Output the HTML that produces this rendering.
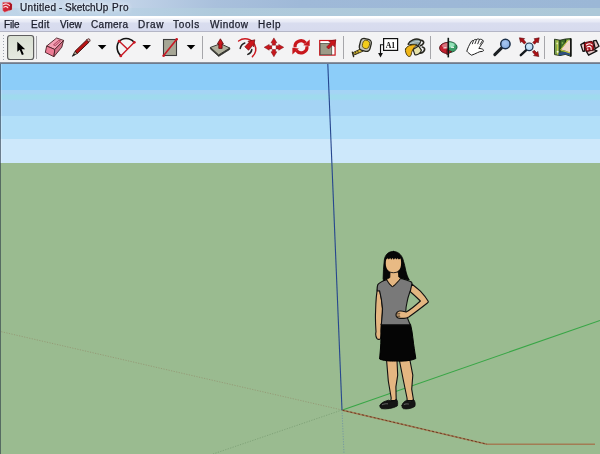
<!DOCTYPE html>
<html>
<head>
<meta charset="utf-8">
<title>Untitled - SketchUp Pro</title>
<style>
html,body{margin:0;padding:0;}
body{width:600px;height:454px;overflow:hidden;position:relative;background:#9abb90;font-family:"Liberation Sans",sans-serif;}
#title{position:absolute;left:0;top:0;width:600px;height:16px;
  background:linear-gradient(to right,#c9daec 0%,#c4d5e9 20%,#a9c0dc 36%,#9fb9d8 50%,#9bb7d6 100%);}
#title .lower{position:absolute;left:0;top:8px;width:600px;height:8px;
  background:linear-gradient(to right,#bfd5e8 0%,#bad1e5 20%,#afcadc 36%,#acc8d8 100%);}
#title .txt{position:absolute;left:0;top:0;height:16px;line-height:15px;font-size:10px;color:#1b1d2b;white-space:nowrap;text-shadow:0 0 4px rgba(255,255,255,.9),0 0 6px rgba(255,255,255,.7);}
#title .txt span{will-change:transform;position:absolute;top:0.3px;-webkit-text-stroke:0.25px #1b1d2b;}
#menu{position:absolute;left:0;top:16px;width:600px;height:16px;
  background:linear-gradient(to bottom,#ffffff 0,#ffffff 2px,#eef0f8 3px,#e6e9f5 6px,#d9ddef 7px,#d7dbee 14px,#d7dbee 15px,#b4b6c6 15px,#b4b6c6 16px);}
#menu span{will-change:transform;position:absolute;top:1px;-webkit-text-stroke:0.25px #1b1d2b;line-height:16px;font-size:10px;color:#1b1d2b;white-space:nowrap;}
#tb{position:absolute;left:0;top:32px;width:600px;height:30px;background:#f3f3f4;}
#tbline{position:absolute;left:0;top:62px;width:600px;height:2px;background:linear-gradient(to bottom,#9a9ea6,#5f6f86);}
#tbsvg{will-change:transform;position:absolute;left:0;top:32px;width:600px;height:32px;}
#view{position:absolute;left:0;top:64px;width:600px;height:390px;}
</style>
</head>
<body>
<div id="title"><div class="lower"></div><svg style="position:absolute;left:0;top:0" width="16" height="16" viewBox="0 0 16 16">
<path d="M2.6 2.6 Q2.6 2.2 3.2 2.2 L9.8 2.2 L12 4.4 L11.8 9.6 L4.6 12.2 L2.8 10.4 Z" fill="#cf2434" stroke="#e8a0a8" stroke-width="0.5"/>
<path d="M9.8 2.2 L12 4.4 L11.8 9.6 L9.6 10.4 Z" fill="#a81422"/>
<path d="M3.4 4.6 C5.4 3.4 8.4 3.8 9.4 5.6 M3.8 7.2 C5.2 6.2 7.2 6.4 7.8 7.8" fill="none" stroke="#fbe4e6" stroke-width="1.1" stroke-linecap="round"/>
</svg><div class="txt"><span style="left:19.5px;letter-spacing:0.3px">Untitled</span><span style="left:59.2px">-</span><span style="left:65.3px">SketchUp</span><span style="left:111.7px;letter-spacing:0.5px">Pro</span></div></div>
<div id="menu">
<span style="left:4.3px;letter-spacing:-0.2px">File</span>
<span style="left:30.7px;letter-spacing:0.35px">Edit</span>
<span style="left:60px;letter-spacing:0.1px">View</span>
<span style="left:91px;letter-spacing:0.3px">Camera</span>
<span style="left:138.2px;letter-spacing:0.75px">Draw</span>
<span style="left:173px;letter-spacing:0.7px">Tools</span>
<span style="left:210px;letter-spacing:0.5px">Window</span>
<span style="left:258px;letter-spacing:0.7px">Help</span>
</div>
<div id="tb"></div>
<svg id="tbsvg" viewBox="0 32 600 32">
<defs>
<linearGradient id="selg" x1="0" y1="0" x2="0" y2="1"><stop offset="0" stop-color="#d9dfd2"/><stop offset="1" stop-color="#e6eae0"/></linearGradient>
<radialGradient id="lens1" cx="0.45" cy="0.4" r="0.7"><stop offset="0" stop-color="#a9c8f2"/><stop offset="1" stop-color="#7ea6de"/></radialGradient>
<radialGradient id="lens2" cx="0.45" cy="0.4" r="0.7"><stop offset="0" stop-color="#d4ecfb"/><stop offset="1" stop-color="#a6d0f2"/></radialGradient>
</defs>
<!-- grip -->
<g fill="#9da2ac">
<rect x="3" y="35" width="1" height="1"/><rect x="3" y="38" width="1" height="1"/><rect x="3" y="41" width="1" height="1"/><rect x="3" y="44" width="1" height="1"/><rect x="3" y="47" width="1" height="1"/><rect x="3" y="50" width="1" height="1"/><rect x="3" y="53" width="1" height="1"/><rect x="3" y="56" width="1" height="1"/><rect x="3" y="59" width="1" height="1"/>
</g>
<!-- select button -->
<rect x="7.6" y="35.5" width="26" height="24" rx="2.5" fill="url(#selg)" stroke="#5e5e5e" stroke-width="1.2"/>
<path d="M17.3 41.8 L17.3 51.8 L19.7 49.8 L21.9 55 L23.8 54.2 L21.6 49.2 L25.2 49.2 Z" fill="#000"/>
<!-- separators -->
<g stroke="#a6a6aa" stroke-width="1">
<line x1="36.5" y1="36" x2="36.5" y2="59"/>
<line x1="202.5" y1="36" x2="202.5" y2="59"/>
<line x1="343.5" y1="36" x2="343.5" y2="59"/>
<line x1="430.5" y1="36" x2="430.5" y2="59"/>
<line x1="544.5" y1="36" x2="544.5" y2="59"/>
</g>
<!-- eraser -->
<g stroke="#4a2026" stroke-width="0.9" stroke-linejoin="round">
<path d="M46.7 46 L56.6 38 L63.6 40.4 L54.8 49.5 Z" fill="#f3a0b3"/>
<path d="M46.7 46 L54.8 49.5 L53.9 56.7 L45.3 52.4 Z" fill="#ec7c95"/>
<path d="M54.8 49.5 L63.6 40.4 L61.8 47.2 L53.9 56.7 Z" fill="#d27187"/>
</g>
<path d="M53.5 44.8 L58.8 40.3 L60.6 41 L55.4 45.7 Z" fill="#e88aa0" stroke="#9a3850" stroke-width="0.8"/>
<!-- pencil -->
<g>
<path d="M72.4 56.3 L75 51.2 L77.4 53.4 Z" fill="#b8a890" stroke="#222" stroke-width="0.8"/>
<path d="M72.4 56.3 L73.8 53.6 L75.2 54.8 Z" fill="#111"/>
<path d="M75 51.2 L86.6 40 L89 42.2 L77.4 53.4 Z" fill="#b81414" stroke="#3a0c0c" stroke-width="0.9"/>
<path d="M86.6 40 L87.6 39 Q88.8 38.4 89.6 39.2 Q90.4 40.2 89.8 41.3 L89 42.2 Z" fill="#d8b0b0" stroke="#3a0c0c" stroke-width="0.8"/>
</g>
<!-- dropdown arrows -->
<g fill="#000">
<path d="M97.8 45 L106.4 45 L102.1 49.6 Z"/>
<path d="M142.4 45 L151 45 L146.7 49.6 Z"/>
<path d="M186.7 45 L195.3 45 L191 49.6 Z"/>
</g>
<!-- arc -->
<g fill="none">
<path d="M120.8 55.9 C115.5 50.5 116 42.5 121.5 39.6 C126 37.2 131.5 38.8 134.3 42.3" stroke="#111" stroke-width="1.6"/>
<path d="M120.8 55.9 L134.3 42.3 M119.2 41.2 L127.4 48.9" stroke="#c81824" stroke-width="1.4"/>
</g>
<g fill="#c81824"><circle cx="120.8" cy="55.9" r="1.4"/><circle cx="134.3" cy="42.3" r="1.4"/><circle cx="119.2" cy="41.2" r="1.4"/></g>
<!-- rectangle -->
<rect x="163.5" y="39.5" width="13" height="16" fill="#a6a695" stroke="#3c3c3c" stroke-width="1.1"/>
<path d="M163.5 55.7 L176.7 39.2" stroke="#c81824" stroke-width="1.6"/>
<g fill="#c81824"><circle cx="163.6" cy="55.7" r="1.3"/><circle cx="176.7" cy="39.3" r="1.3"/></g>
<!-- push/pull -->
<g stroke-linejoin="round">
<path d="M210.4 47.4 L218.7 54.9 L229.8 48 L229.8 49.4 L218.7 56.4 L210.4 48.9 Z" fill="#3a3a34" stroke="#2a2a26" stroke-width="0.7"/>
<path d="M210.4 47.4 L220.5 43.7 L229.8 48 L218.7 54.9 Z" fill="#b0b09d" stroke="#2a2a26" stroke-width="0.9"/>
<path d="M220.4 38.8 L223.4 43.8 L222.1 43.8 L222.1 48.4 L218.8 48.4 L218.8 43.8 L217.4 43.8 Z" fill="#cc161c" stroke="#5a0a0c" stroke-width="0.8"/>
</g>
<!-- offset -->
<g fill="none" stroke-linecap="round">
<path d="M238.6 41 C244 37 251.4 38.6 254.6 44.6 C256.6 48.6 255.6 53.4 252.4 56.6" stroke="#cb1a20" stroke-width="1.5"/>
<path d="M240.2 48.4 C240.8 45.6 242.6 43.8 244.8 43" stroke="#222" stroke-width="1.5"/>
<path d="M251.8 49.6 C251.6 51.4 250 53.4 247.8 54.4" stroke="#222" stroke-width="1.5"/>
</g>
<path d="M244.8 46.8 L249 42.6 L248 41.4 L254.8 39.8 L253.6 46.8 L252.4 45.6 L248.6 50.2 Z" fill="#cc161c" stroke="#6a0a0c" stroke-width="0.7" stroke-linejoin="round"/>
<!-- move -->
<g fill="#c8161c" stroke="#7a0c10" stroke-width="0.5" stroke-linejoin="round">
<path d="M273.9 37.9 L276.8 42.8 L275.5 42.8 L275.5 45.2 L272.3 45.2 L272.3 42.8 L271 42.8 Z"/>
<path d="M273.9 56.7 L276.8 51.8 L275.5 51.8 L275.5 49.4 L272.3 49.4 L272.3 51.8 L271 51.8 Z"/>
<path d="M264.2 47.3 L269.2 44.4 L269.2 45.7 L271.8 45.7 L271.8 48.9 L269.2 48.9 L269.2 50.2 Z"/>
<path d="M283.7 47.3 L278.7 44.4 L278.7 45.7 L276.1 45.7 L276.1 48.9 L278.7 48.9 L278.7 50.2 Z"/>
</g>
<rect x="272.5" y="45.9" width="2.8" height="2.8" fill="#fff"/>
<!-- rotate -->
<g fill="none" stroke="#c8161c" stroke-width="3.2">
<path d="M295.1 47.4 A5.9 5.9 0 0 1 305.6 43"/>
<path d="M306.9 46.2 A5.9 5.9 0 0 1 296.4 50.6"/>
</g>
<g fill="#c8161c">
<path d="M309.7 39.4 L309.7 46 L303.2 45.2 Z"/>
<path d="M292.4 54.4 L292.4 47.8 L298.9 48.6 Z"/>
</g>
<!-- scale -->
<rect x="319.7" y="40.5" width="15.4" height="14.6" fill="#fff" stroke="#c8161c" stroke-width="1.2"/>
<rect x="320.3" y="43.4" width="11.4" height="11.3" fill="#9c9c89" stroke="#55554a" stroke-width="0.8"/>
<path d="M326.6 47 L330.6 43 L328.8 41.2 L335.9 39.7 L334.4 46.8 L332.6 45 L328.6 49 Z" fill="#c8161c" stroke="#7a0c10" stroke-width="0.6"/>
<!-- tape -->
<g stroke-linejoin="round">
<path d="M361.4 48.6 L353.4 52.4 L354.4 55 L363.4 51 Z" fill="#e0c030" stroke="#2a2618" stroke-width="0.9"/>
<path d="M357.6 50.8 L358.4 53 M355.4 51.8 L356.2 54" stroke="#2a2618" stroke-width="0.8"/>
<path d="M352.4 52.2 L353.6 56.6" stroke="#2a2618" stroke-width="1.4" stroke-linecap="round"/>
<rect x="359.8" y="38.8" width="11" height="12.2" rx="3.6" fill="#c4c4ba" stroke="#26261e" stroke-width="1.3" transform="rotate(14 365.3 44.9)"/>
<ellipse cx="366" cy="44.5" rx="3.5" ry="4.2" fill="#f2cc1c" stroke="#5a4a10" stroke-width="0.8" transform="rotate(14 366.2 44.4)"/>
</g>
<!-- text tool -->
<rect x="383.6" y="38.6" width="14" height="11.8" fill="#fff" stroke="#111" stroke-width="1.2"/>
<text x="390.5" y="47.6" font-family="Liberation Serif, serif" font-size="7.8" font-weight="bold" text-anchor="middle" fill="#111">A1</text>
<path d="M383.5 44.8 L380.5 44.8 L380.5 53.6" fill="none" stroke="#111" stroke-width="1.1"/>
<path d="M378.1 53 L382.9 53 L380.5 57.4 Z" fill="#111"/>
<!-- paint bucket -->
<g stroke-linejoin="round" stroke-linecap="round">
<path d="M420 40.6 C422.6 39.8 424.4 41.6 423.4 43.4 C422.8 44.6 421.6 45.4 420.4 45.6" fill="none" stroke="#26261e" stroke-width="1.7"/>
<path d="M422.4 47 C424.6 47.4 425.2 49.4 424 51 C423.2 52.2 421.8 53 420.6 53.2" fill="none" stroke="#26261e" stroke-width="1.7"/>
<path d="M413 49.4 L418.6 46 L421.4 50.2 C421 53.2 417.6 55.4 414.8 54.6 Z" fill="#e6e2aa" stroke="#26261e" stroke-width="1.2"/>
<path d="M408 44.2 C409.6 40.4 415.4 37.8 420 39.6 C421 41.8 419.8 44.4 417.4 46 C414 45 411 45 408 44.2 Z" fill="#8aa2a2" stroke="#26261e" stroke-width="1.3"/>
<path d="M409.6 44 C412 42.4 416.4 41.2 419.8 41.6" fill="none" stroke="#c6d4d4" stroke-width="0.9"/>
<path d="M405.6 49 C406.6 46 411 44.2 417 44.8 C413.6 46.8 411.4 51.4 411 55.4 C410 56.8 408.4 56.8 407.4 55.6 C405.8 53.6 405 51 405.6 49 Z" fill="#f0b618" stroke="#3a2e06" stroke-width="0.9"/>
</g>
<!-- orbit -->
<path d="M448.3 42.3 A8.8 5.7 0 0 0 448.3 53.7 Z" fill="#c2202e" stroke="#4a0a10" stroke-width="0.8"/>
<path d="M448.3 43.1 A6.4 2.7 0 0 0 448.3 48.5 Z" fill="#d8747e"/>
<path d="M448.3 41.5 A8.8 5.6 0 0 1 448.3 52.7 Z" fill="#3a9c66" stroke="#0c4a2c" stroke-width="0.8"/>
<path d="M448.3 42.3 A6.4 2.7 0 0 1 448.3 47.7 Z" fill="#92e2b8"/>
<path d="M446.8 49.8 L451.8 51.6 L446.8 55 Z" fill="#c2202e" stroke="#4a0a10" stroke-width="0.6" stroke-linejoin="round"/>
<path d="M443.4 48 L446.4 47.8 M451 47.2 L454 47.4" stroke="#fff" stroke-width="1" fill="none"/>
<path d="M448.3 37.8 L448.3 57.4" stroke="#101814" stroke-width="1.6"/>
<!-- hand -->
<path d="M471.6 55.2 C469.6 54 467.8 52.4 466.8 51.2 C467.6 48.4 469.4 44.6 471 42 C471.6 40.8 472.8 40.2 473.4 40.6 C474.2 39.6 475.6 39.2 476.4 39.6 C477.4 38.8 478.6 38.8 479.4 39.4 C480.6 39 482 39.4 482.6 40.2 C483.6 40.4 483.6 41.4 483 42.2 C482.2 43.6 481.2 45 480.4 46 C479.8 47 479.2 47.8 478.8 48.4 C480.4 48.4 482.4 48.8 483.4 49.8 C483.8 50.6 483.2 51.4 482.2 51.4 C480.6 51.4 479 51.8 477.6 52.6 C475.6 53.6 473.4 54.6 471.6 55.2 Z" fill="#fff" stroke="#1e1e1e" stroke-width="1" stroke-linejoin="round"/>
<path d="M473.4 40.8 L472.4 43.8 M476.4 39.8 L475 43.6 M479.4 39.6 L477.8 43.8 M482.4 40.6 L480.2 44.4" stroke="#1e1e1e" stroke-width="0.9" fill="none" stroke-linecap="round"/>
<!-- zoom -->
<path d="M501.4 48.2 L494.8 54.6" stroke="#1c2024" stroke-width="3" stroke-linecap="round"/>
<circle cx="505.4" cy="44" r="4.7" fill="url(#lens1)" stroke="#1a2e48" stroke-width="1.5"/>
<!-- zoom extents -->
<path d="M526.2 50.2 L520.8 55.2" stroke="#14181c" stroke-width="2.4" stroke-linecap="round"/>
<circle cx="529.2" cy="46.8" r="3.8" fill="url(#lens2)" stroke="#1a2e48" stroke-width="1.2"/>
<g fill="#ac1016" stroke="#5a080c" stroke-width="0.6" stroke-linejoin="round">
<path d="M519.4 37.8 L524.6 38.6 L523.6 39.8 L526 42.4 L524.2 44 L521.8 41.4 L520.6 42.6 Z"/>
<path d="M539.2 37.8 L538.2 43 L537 41.8 L534.6 44.2 L532.8 42.4 L535.2 40 L534 38.8 Z"/>
<path d="M538.8 56.6 L533.6 55.6 L534.8 54.4 L532.4 52 L534.2 50.2 L536.6 52.6 L537.8 51.4 Z"/>
</g>
<!-- map -->
<g stroke-linejoin="round">
<path d="M554.5 39.2 L560 40.2 L560 55.6 L554.5 54.6 Z" fill="#7da24c" stroke="#1c2a14" stroke-width="0.9"/>
<path d="M560 40.2 L565.4 39 L565.4 54.4 L560 55.6 Z" fill="#41702c" stroke="#1c2a14" stroke-width="0.9"/>
<path d="M565.4 39 L571 38.6 L571 56.4 L565.4 54.4 Z" fill="#5d8c3a" stroke="#1c2a14" stroke-width="0.9"/>
<path d="M561.2 49.6 L568.2 40.4 L570.4 40.2 L570.4 52.4 L565.4 50.8 Z" fill="#f0d8cc"/>
<path d="M558.6 52.8 L565.4 51.8 L570.4 53.4 L570.4 55.8 L565.4 54.2 L560 55.4 L558.6 55 Z" fill="#2f4f84"/>
<path d="M557.2 40.6 L557.6 54.6 M560.6 49.8 L568.2 39.8 M560.6 50 L570.2 53" fill="none" stroke="#d8d444" stroke-width="0.9"/>
<circle cx="557.2" cy="43.4" r="0.9" fill="#dfe8b8"/><circle cx="557.6" cy="51.8" r="1" fill="#f4f4e8"/><circle cx="562.4" cy="43" r="0.8" fill="#9cc060"/>
<path d="M570.8 38.4 L570.8 56.6" stroke="#111" stroke-width="1.5"/>
</g>
<!-- get models -->
<g stroke-linejoin="round">
<path d="M580.8 44.6 L584.6 42.2 L584.8 51 L583 51.4 Z" fill="#e4c4c4" stroke="#141414" stroke-width="1.3"/>
<path d="M593.4 40.8 L596.2 40.4 L599 46.2 L595.2 48.8 Z" fill="#e4c4c4" stroke="#141414" stroke-width="1.3"/>
<path d="M586.2 51.2 L594 49.6 L597 50.8 L588.6 55.2 Z" fill="#e4c4c4" stroke="#141414" stroke-width="1.3"/>
<rect x="584.8" y="41.8" width="8.8" height="9" rx="1.8" fill="#ac141c" stroke="#4a080c" stroke-width="0.9" transform="rotate(-12 589.2 46.3)"/>
<path d="M586.6 44.8 C588.4 43.4 591 43.4 592.2 45 M587 47.2 C588.2 46.2 590 46.2 591 47.4 L591.2 49.6 M587.8 49.8 L587.8 48.8" fill="none" stroke="#fff" stroke-width="1.1" stroke-linecap="round"/>
</g>
</svg>


<div id="tbline"></div>
<svg id="view" viewBox="0 64 600 390">
<defs><linearGradient id="teal" x1="0" y1="0" x2="0" y2="1"><stop offset="0" stop-color="#9fdaee" stop-opacity="0"/><stop offset="0.3" stop-color="#9fdaee" stop-opacity="1"/><stop offset="0.7" stop-color="#9fdaee" stop-opacity="1"/><stop offset="1" stop-color="#9fdaee" stop-opacity="0"/></linearGradient></defs>
<rect x="0" y="64" width="600" height="26" fill="#8ccdf9"/>
<rect x="0" y="90" width="600" height="26" fill="#a5d4f5"/>
<rect x="0" y="93" width="600" height="8" fill="url(#teal)"/>
<rect x="0" y="116" width="600" height="23" fill="#b2dff9"/>
<rect x="0" y="139" width="600" height="24" fill="#cde8fb"/>
<rect x="0" y="163" width="600" height="291" fill="#9abb90"/>

<!-- axes -->
<g fill="none" stroke-width="1">
<path d="M342 410 L0 331.4" stroke="#93906e" stroke-dasharray="1.2 1.4" stroke-width="0.9" opacity="0.85"/>
<path d="M342 410 L213 454" stroke="#769a70" stroke-dasharray="1.2 1.4" stroke-width="0.9" opacity="0.85"/>
<path d="M342 410 L344 454" stroke="#6a8ea4" stroke-dasharray="1.2 1.4" stroke-width="0.9" opacity="0.85"/>
<path d="M342.5 410 L600 320.4" stroke="#38a646" stroke-width="1.1"/>
<path d="M327.8 64 L342 410" stroke="#26468e" stroke-width="1.1"/>
<path d="M342.5 410.2 L487 444.2 L595 444.2" stroke="#a27c54" stroke-width="1.4"/>
<path d="M342.5 410.2 L487 444.2" stroke="#6a3a22" stroke-width="1" stroke-dasharray="2 2"/>
</g>
<rect x="0" y="64" width="1" height="390" fill="#2a3644" opacity="0.6"/>
<rect x="1" y="64" width="1" height="99" fill="#ffffff" opacity="0.2"/>
<!-- person -->
<g stroke-linejoin="round" stroke-linecap="round">
<!-- legs -->
<path d="M386.6 360.5 L397 360.5 L397.7 375.2 L395.9 386.8 L396.2 400.5 L390.8 400.5 L391.2 398 L388.3 381 Z" fill="#e4b681" stroke="#111" stroke-width="1.1"/>
<path d="M399.4 360.5 L410 360.5 L412.8 375.2 L411.7 389.2 L413.6 400.5 L407.2 400.5 L407 398 L403.5 381 Z" fill="#e4b681" stroke="#111" stroke-width="1.1"/>
<!-- shoes -->
<path d="M380 405.8 C380 403.2 384 401.4 388.6 400.2 C390.6 401.6 394.6 401 396.4 399.2 C397.8 400.6 398 404.4 397.2 406 C393 408.4 386 409.4 381.4 408.6 C380.2 408 380 406.8 380 405.8 Z" fill="#151515" stroke="#0a0a0a" stroke-width="0.8"/>
<path d="M402 405.6 C402 403 404.6 401.4 406.6 400.4 C408.6 401.8 411.6 401.4 413.4 399.4 C415.2 400.8 415.6 404.6 414.8 406.4 C411.6 408.6 406.6 409.4 403.2 408.6 C402.2 408 402 406.8 402 405.6 Z" fill="#151515" stroke="#0a0a0a" stroke-width="0.8"/>
<path d="M382.4 404.6 C384.4 403.8 386.4 403.6 387.6 403.8 M404.2 404.4 C405.6 403.8 407.2 403.8 408.4 404" fill="none" stroke="#8a8a8a" stroke-width="0.7"/>
<!-- left arm (viewer left) -->
<path d="M377.9 286.5 C376.6 292 375.8 302 375.6 311 C375.2 318 375.6 326 376 331.8 C375.4 334.4 376 337.2 377 338.6 C378.2 339.8 380.2 339.6 380.6 338.4 C381.2 336 381.2 333 381 331 C381.4 324 382.6 314 382.4 308.3 C382 302 380.8 295 379.8 290.8 Z" fill="#e4b681" stroke="#111" stroke-width="1.1"/>
<!-- skirt -->
<path d="M381.3 324.2 L410.5 324.2 C411.6 329 412.4 333 412.8 337.5 C413.6 345 415 353 415.8 358.6 C411 361 402 361.4 396 361 C390 361.4 383 360.6 379.6 359 C380 354 380.6 348 380.8 343.3 C381 337 381.2 330 381.3 324.2 Z" fill="#050505" stroke="#000" stroke-width="1"/>
<!-- shirt -->
<path d="M377.8 284.7 C379 283.2 382 281.4 386.6 279.6 C388.4 282.4 390.6 285.4 392.4 286.6 C394.6 285.4 398 281.6 400.4 278.4 C404.4 279.6 409.4 281 411.7 282.3 C412.4 285 411.4 289 409.9 291.7 C408.4 296 407.4 299.6 407 302.5 C406.2 306 405.6 309 405.8 311.8 C406.4 316 408.4 320.6 410.2 324.7 L381.3 324.7 C381.8 319 382.6 313 382.5 308.3 C382 302 380.8 295.4 379.6 290.8 L377.3 291 C377 288.6 377.2 286.4 377.8 284.7 Z" fill="#797979" stroke="#111" stroke-width="1.1"/>
<!-- right arm -->
<path d="M411.8 284 C415 286.5 418 289 420.4 291.2 C423.5 294.5 426.5 298.4 428.2 301.2 C428.4 302 428 302.6 427.4 303 C421 308 414 313.4 408.8 317 C406.8 318.2 404.4 318.6 402.2 318.2 C400 318.6 397.4 318 396.4 316.6 C395.8 315 396 313.4 397 312.4 C398 311.2 399.4 310.8 400.4 311 C402.4 310.8 404.6 311.6 406.2 312 C410 310 416 305 420.4 301 C417 297.6 413.6 294.4 410.3 291.7 Z" fill="#e4b681" stroke="#111" stroke-width="1.1"/>
<path d="M396.6 313.2 L399.8 313.4 M396.3 314.9 L399.6 315.1 M396.8 316.6 L399.8 316.6" stroke="#3a2a1a" stroke-width="0.7" fill="none"/>
<!-- neck -->
<path d="M389.6 272 L398.6 272 C398.6 275 399.4 277.4 400.4 278.6 C398 281.8 394.6 285.4 392.4 286.4 C390.6 285.4 388.4 282.4 386.8 279.6 C388.6 278.4 389.6 275.4 389.6 272 Z" fill="#e4b681"/>
<path d="M386.6 279.6 C388.4 282.4 390.6 285.4 392.4 286.6 C394.6 285.4 398 281.6 400.4 278.4" fill="none" stroke="#2a2218" stroke-width="1"/>
<!-- hair -->
<path d="M393.6 251.4 C388.6 251.2 385 254.6 384.3 260.2 C383.6 266 383.2 273 383.1 278.8 L383.7 280.6 C385.6 279.8 388.4 278.6 389.8 277.6 L390 272 L398.4 272 L398.8 277 C401 278.2 405.6 279.4 409.3 280 C407.6 277 406.4 273.6 405.8 270.7 C405 267 404.4 264 403.5 261.3 C402.6 256.4 399.4 251.6 393.6 251.4 Z" fill="#070707" stroke="#000" stroke-width="0.8"/>
<!-- face -->
<path d="M386.2 259.4 L387.8 258.2 L388.8 259.6 L390.2 258 L391.2 259.8 L392.6 258 L393.8 259.8 L395.2 258 L396.2 259.6 L397.6 258.2 L398.8 259.6 L400.6 258.6 C401.3 261.4 401.3 265 400.5 267.6 C399.2 271 396.6 273.4 393.6 273.4 C390.4 273.4 387.6 271 386.4 267.6 C385.6 265 385.6 262 386.2 259.4 Z" fill="#e8ba84"/>
<path d="M388.6 271.2 C390.4 273.2 396.4 273.4 398.6 271" fill="none" stroke="#111" stroke-width="0.9"/>
</g>
</svg>
</body>
</html>
